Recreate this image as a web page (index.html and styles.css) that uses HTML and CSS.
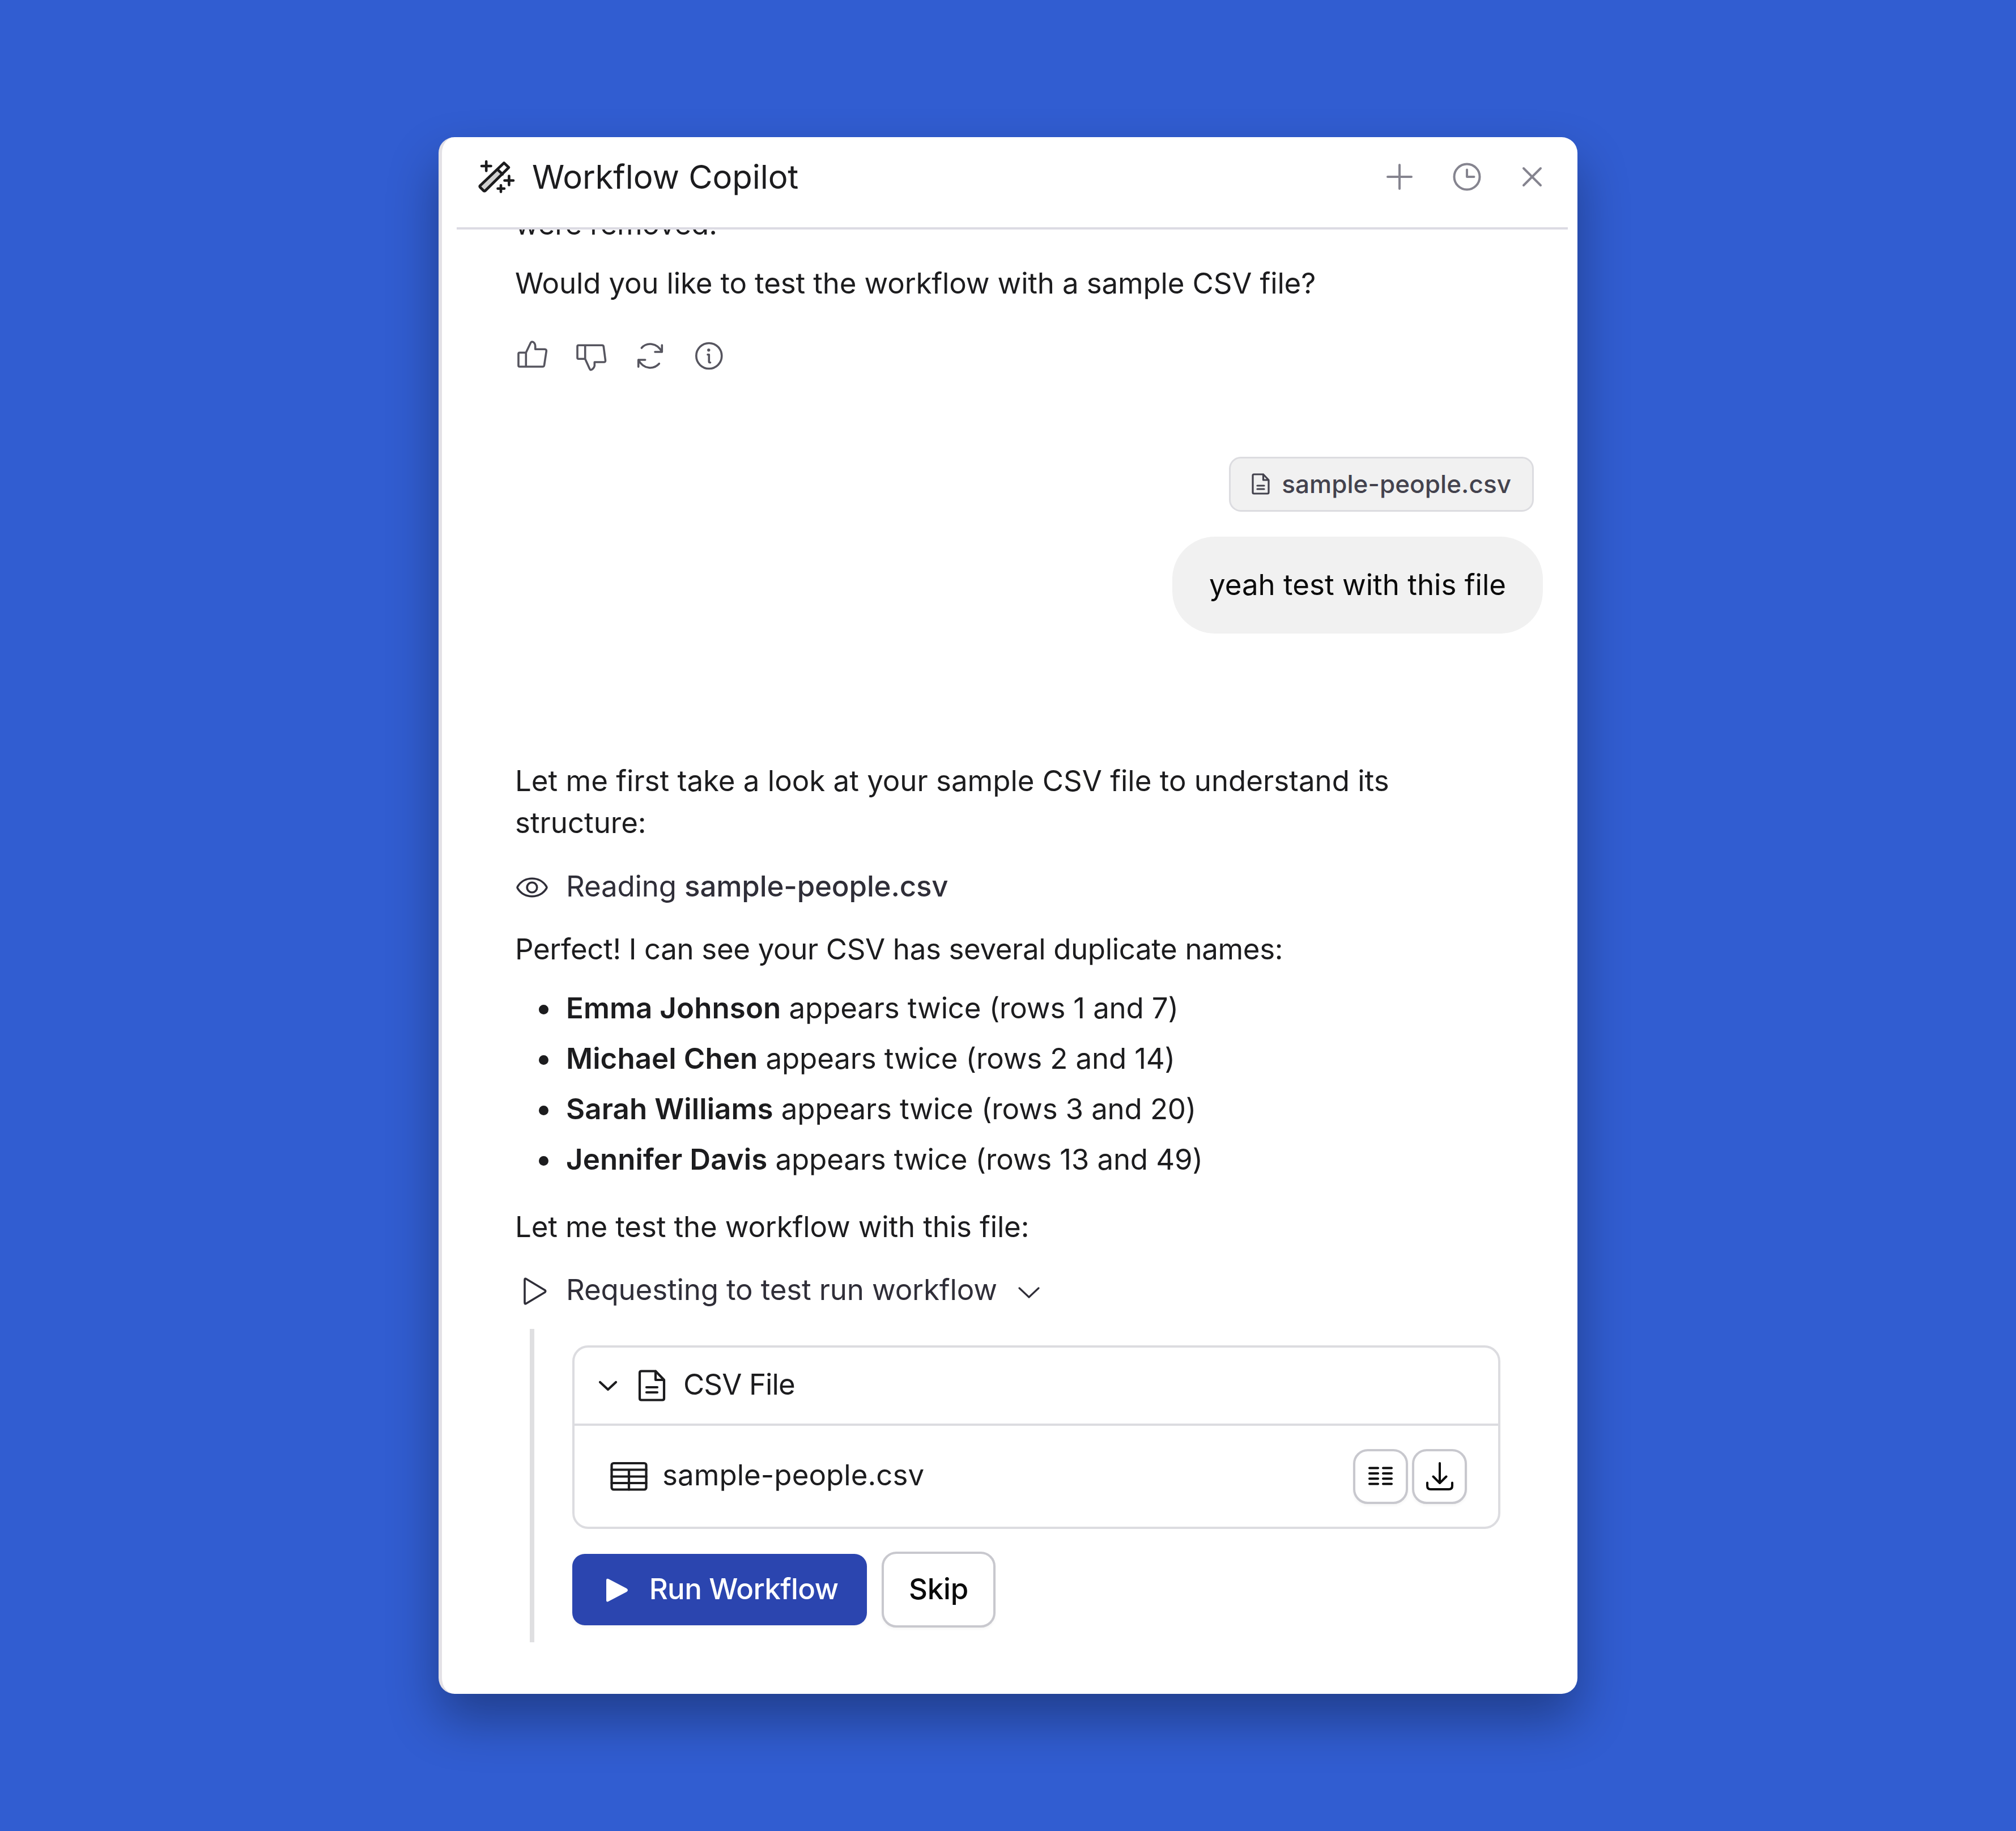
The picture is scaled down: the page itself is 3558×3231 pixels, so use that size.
FILE: index.html
```html
<!DOCTYPE html>
<html lang="en">
<head>
    <meta charset="UTF-8">
    <title>Workflow Copilot</title>
    <link rel="stylesheet" href="styles.css">
</head>
<body>
    <div class="panel">
        <header class="panel-header">
            <svg class="wand" width="70" height="70" viewBox="0 0 70 70">
                <path d="M38 22 L46.500 31 L14 60 L6 52Z" fill="#d0d0d0" stroke="none"/>
                <path d="M48.500 10.500 L57 18.500 L15.500 59.500 Q14 61 12.500 59.500 L6.500 53.500 Q5 52 6.500 50.500Z M37.500 22.500 L46 30.500"/>
                <path d="M17.200 8V24.500 M9 16H25.500 M57.400 33.500V49.500 M49.500 41.500H65 M43 50V61.500 M37.500 55.700H49"/>
            </svg>
            <h1 class="title">Workflow Copilot</h1>
            <div class="header-actions">
                <svg width="60" height="60" viewBox="0 0 60 60"><path d="M30 9V51 M9 30H51"/></svg>
                <svg class="clock" width="60" height="60" viewBox="0 0 60 60"><circle cx="30" cy="30" r="22.500"/><path d="M30 17.500V30H42.500"/></svg>
                <svg width="60" height="60" viewBox="0 0 60 60"><path d="M15 15L45 45 M45 15L15 45"/></svg>
            </div>
        </header>

        <div class="chat">
            <p class="text cut">were removed.</p>
            <p class="text question">Would you like to test the workflow with a sample CSV file?</p>

            <div class="feedback">
                <svg width="60" height="60" viewBox="0 0 60 60">
                    <path d="M19.300 24.300H8Q6 24.300 6 26.300V47Q6 49 8 49H48.700Q51 49 51.500 46.500L55.300 21.500Q55.500 18.500 52.500 18.300H35.700V12.500C35.700 8.500 33 5 30 5Q28.500 5 27.500 7L19.300 24.300V49"/>
                </svg>
                <svg width="60" height="60" viewBox="0 0 60 60">
                    <path d="M19.700 35.300H8Q6 35.300 6 33.300V13.300Q6 11.300 8 11.300H49.500Q52 11.300 52.300 13.800L55.500 38Q55.700 41 52.700 41H36.300V47.500C35.500 51.500 32 54.700 29.700 54.700Q28.500 54.700 27.500 52.500L19.700 35.300V11.300"/>
                </svg>
                <svg width="60" height="60" viewBox="0 0 60 60">
                    <path d="M15.300 16C24 6 42 5.500 51.300 23V11 M51.300 23H39 M46.300 43.700C37 54 19 54.500 9.700 37V49.300 M9.700 37H21.700"/>
                </svg>
                <svg width="60" height="60" viewBox="0 0 60 60">
                    <circle cx="30.300" cy="30" r="22.500"/>
                    <circle cx="29.800" cy="19.700" r="2.700" class="dot"/>
                    <path d="M28 27.700H30.300V40Q30.300 41.700 32.500 41.700"/>
                </svg>
            </div>

            <div class="user">
                <div class="chip">
                    <svg width="32" height="40" viewBox="0 0 32 40">
                        <path d="M20.500 3H4Q2 3 2 5V35Q2 37 4 37H28Q30 37 30 35V13L20.500 3V13H30 M10 23H22 M10 29H22"/>
                    </svg>
                    <span>sample-people.csv</span>
                </div>
                <div class="bubble">yeah test with this file</div>
            </div>

            <p class="text intro">Let me first take a look at your sample CSV file to understand its structure:</p>

            <div class="step">
                <svg width="60" height="60" viewBox="0 0 60 60">
                    <path d="M4.500 33.500Q3.500 32 4.500 30.500C16 11.500 44 11.500 55.500 30.500Q56.500 32 55.500 33.500C44 52.500 16 52.500 4.500 33.500Z"/>
                    <circle cx="30" cy="32" r="8.800"/>
                </svg>
                <span>Reading <b>sample-people.csv</b></span>
            </div>

            <p class="text perfect">Perfect! I can see your CSV has several duplicate names:</p>

            <ul class="names">
                <li><strong>Emma Johnson</strong> appears twice (rows 1 and 7)</li>
                <li><strong>Michael Chen</strong> appears twice (rows 2 and 14)</li>
                <li><strong>Sarah Williams</strong> appears twice (rows 3 and 20)</li>
                <li><strong>Jennifer Davis</strong> appears twice (rows 13 and 49)</li>
            </ul>

            <p class="text">Let me test the workflow with this file:</p>

            <div class="step request">
                <svg width="60" height="60" viewBox="0 0 60 60">
                    <path d="M17 12.500Q17 9 20 11L52.500 30.500Q55 32.500 52.500 34.500L20 54Q17 56 17 52.500Z"/>
                </svg>
                <span>Requesting to test run workflow</span>
                <svg class="chevron" width="44" height="26" viewBox="0 0 44 26"><path d="M5 6L22 22L39 6"/></svg>
            </div>

            <div class="request-body">
                <div class="card">
                    <div class="card-header">
                        <svg width="40" height="28" viewBox="0 0 40 28"><path d="M6 8L20 21L34 8"/></svg>
                        <svg class="file-icon" width="56" height="60" viewBox="0 0 56 60">
                            <path d="M34 4.500H9Q6 4.500 6 7.500V52.500Q6 55.500 9 55.500H46Q49 55.500 49 52.500V20L34 4.500V20H49 M18 33H37 M18 42H37"/>
                        </svg>
                        <span>CSV File</span>
                    </div>
                    <div class="card-row">
                        <svg width="70" height="56" viewBox="0 0 70 56">
                            <rect x="4.500" y="5" width="61" height="46.500" rx="3.500"/>
                            <path d="M4.500 16.500H65.500 M4.500 28.500H65.500 M4.500 40H65.500 M35 16.500V51.500"/>
                        </svg>
                        <span class="file-name">sample-people.csv</span>
                        <button class="icon-btn">
                            <svg width="60" height="60" viewBox="0 0 60 60">
                                <path d="M10 15.500H25 M34 15.500H49 M10 25H25 M34 25H49 M10 34.300H25 M34 34.300H49 M10 43.500H25 M34 43.500H49"/>
                            </svg>
                        </button>
                        <button class="icon-btn">
                            <svg width="60" height="60" viewBox="0 0 60 60">
                                <path d="M30 7V42 M18.500 30.500L30 42L41.500 30.500 M8 41.500V47Q8 53 14 53H46Q52 53 52 47V41.500"/>
                            </svg>
                        </button>
                    </div>
                </div>
                <div class="buttons">
                    <button class="btn run">
                        <svg width="44" height="48" viewBox="0 0 44 48">
                            <path d="M4 7Q4 2 8.500 4.500L40 21Q44 24 40 27L8.500 43.500Q4 46 4 41.500Z"/>
                        </svg>
                        <span>Run Workflow</span>
                    </button>
                    <button class="btn skip">Skip</button>
                </div>
            </div>
        </div>
    </div>
</body>
</html>
```
FILE: styles.css
```css
* {
    box-sizing: border-box;
}
body {
    margin: 0;
    height: 3231px;
    display: flex;
    align-items: center;
    justify-content: center;
    background: #315dd1;
    font-family: Inter, sans-serif;
    font-size: 51px;
    line-height: 74px;
    letter-spacing: -0.15px;
    color: #1c1c1e;
}
svg {
    display: block;
    flex: none;
    fill: none;
    stroke: currentColor;
    stroke-width: 3.6;
    stroke-linecap: round;
    stroke-linejoin: round;
}
p, h1, ul {
    margin: 0;
    padding: 0;
}
.panel {
    width: 2010px;
    height: 2747px;
    background: #fff;
    border-left: 6px solid #e3e1e6;
    border-radius: 28px;
    box-shadow: 0 45px 90px rgba(0, 0, 0, 0.33);
    overflow: hidden;
}

/* Header */
.panel-header {
    display: flex;
    align-items: center;
    height: 163px;
    margin: 0 17px 0 26px;
    padding: 0 33px 19px 35px;
    border-bottom: 4px solid #dcdbe3;
}
.wand {
    stroke-width: 4.6;
}
.title {
    margin-left: 28px;
    font-size: 58px;
    font-weight: 400;
    letter-spacing: -0.05px;
}
.header-actions {
    display: flex;
    gap: 55px;
    margin-left: auto;
    color: #85848f;
}
.header-actions svg {
    stroke-width: 4;
}
.header-actions .clock {
    margin-left: 4px;
}

/* Messages */
.chat {
    height: 2584px;
    padding: 0 61px 0 129px;
    overflow: hidden;
}
.text {
    max-width: 1640px;
}
.cut {
    margin-top: -46px;
}
.question {
    margin-top: 30px;
}
.feedback {
    display: flex;
    gap: 44px;
    margin-top: 61px;
    color: #56555f;
}
.dot {
    fill: currentColor;
    stroke: none;
}
.user {
    display: flex;
    flex-direction: column;
    align-items: flex-end;
    margin-top: 148px;
}
.chip {
    display: flex;
    align-items: center;
    gap: 21px;
    height: 97px;
    margin-right: 16px;
    padding: 0 37px 2px;
    border: 3px solid #dcdce0;
    border-radius: 21px;
    background: #f1f1f1;
    color: #43424d;
    font-size: 44px;
    font-weight: 500;
    letter-spacing: 0.06px;
}
.chip svg {
    stroke-width: 3.2;
}
.bubble {
    height: 171px;
    margin-top: 44px;
    padding: 48px 65px;
    border-radius: 75px;
    background: #f1f1f1;
    color: #0a0a0a;
    letter-spacing: 0;
}
.intro {
    margin-top: 223px;
    letter-spacing: -0.02px;
}
.step {
    display: flex;
    align-items: center;
    margin-top: 38px;
    color: #2f2e38;
}
.step span {
    margin-left: 30px;
}
.step b {
    font-weight: 500;
}
.perfect {
    margin-top: 37px;
    letter-spacing: -0.36px;
}
.names {
    display: flex;
    flex-direction: column;
    gap: 15px;
    margin: 30px 0 45px;
    padding-left: 90px;
    list-style: none;
}
.names li {
    display: flex;
    align-items: center;
    white-space: pre;
}
.names li::before {
    content: "";
    width: 17px;
    height: 17px;
    margin: 4px 31px 0 -48px;
    border-radius: 50%;
    background: #1c1c1e;
}
.names strong {
    font-weight: 600;
    letter-spacing: 0.1px;
}
.request {
    margin-top: 37px;
}
.chevron {
    margin: 8px 0 0 34px;
    stroke-width: 3.2;
}

/* Test run request */
.request-body {
    margin: 32px 0 0 26px;
    padding: 29px 0 26px 67px;
    border-left: 8px solid #dfdfe1;
}
.card {
    width: 1638px;
    height: 324px;
    border: 4px solid #dcdce0;
    border-radius: 28px;
}
.card-header {
    display: flex;
    align-items: center;
    height: 138px;
    padding-left: 39px;
    border-bottom: 4px solid #dcdce0;
}
.card-header svg, .card-row svg {
    stroke-width: 4.2;
}
.card-header .file-icon {
    margin: 0 27px 0 30px;
}
.card-header span {
    padding-bottom: 4px;
    letter-spacing: -0.9px;
}
.card-row {
    display: flex;
    align-items: center;
    gap: 7px;
    height: 178px;
    padding: 0 55px 0 61px;
}
.file-name {
    margin: 0 auto 4px 17px;
    letter-spacing: 0.05px;
}
button {
    display: flex;
    align-items: center;
    justify-content: center;
    padding: 0;
    background: #fff;
    border: 4px solid #c8c8ce;
    box-shadow: 0 3px 5px rgba(0, 0, 0, 0.04);
    color: #0a0a0a;
    font: inherit;
    letter-spacing: inherit;
}
.icon-btn {
    width: 97px;
    height: 97px;
    border-radius: 26px;
}
.icon-btn svg {
    stroke-width: 4;
}
.buttons {
    display: flex;
    align-items: center;
    gap: 26px;
    margin-top: 40px;
}
.btn {
    border-radius: 26px;
    font-weight: 500;
    padding-bottom: 2px;
}
.run {
    width: 520px;
    height: 126px;
    gap: 36px;
    padding-left: 5px;
    border: none;
    border-radius: 22px;
    background: #2b45af;
    color: #fff;
    letter-spacing: -0.6px;
}
.run svg {
    fill: #fff;
    stroke: none;
    margin-top: 3px;
}
.skip {
    width: 201px;
    height: 134px;
}
```
